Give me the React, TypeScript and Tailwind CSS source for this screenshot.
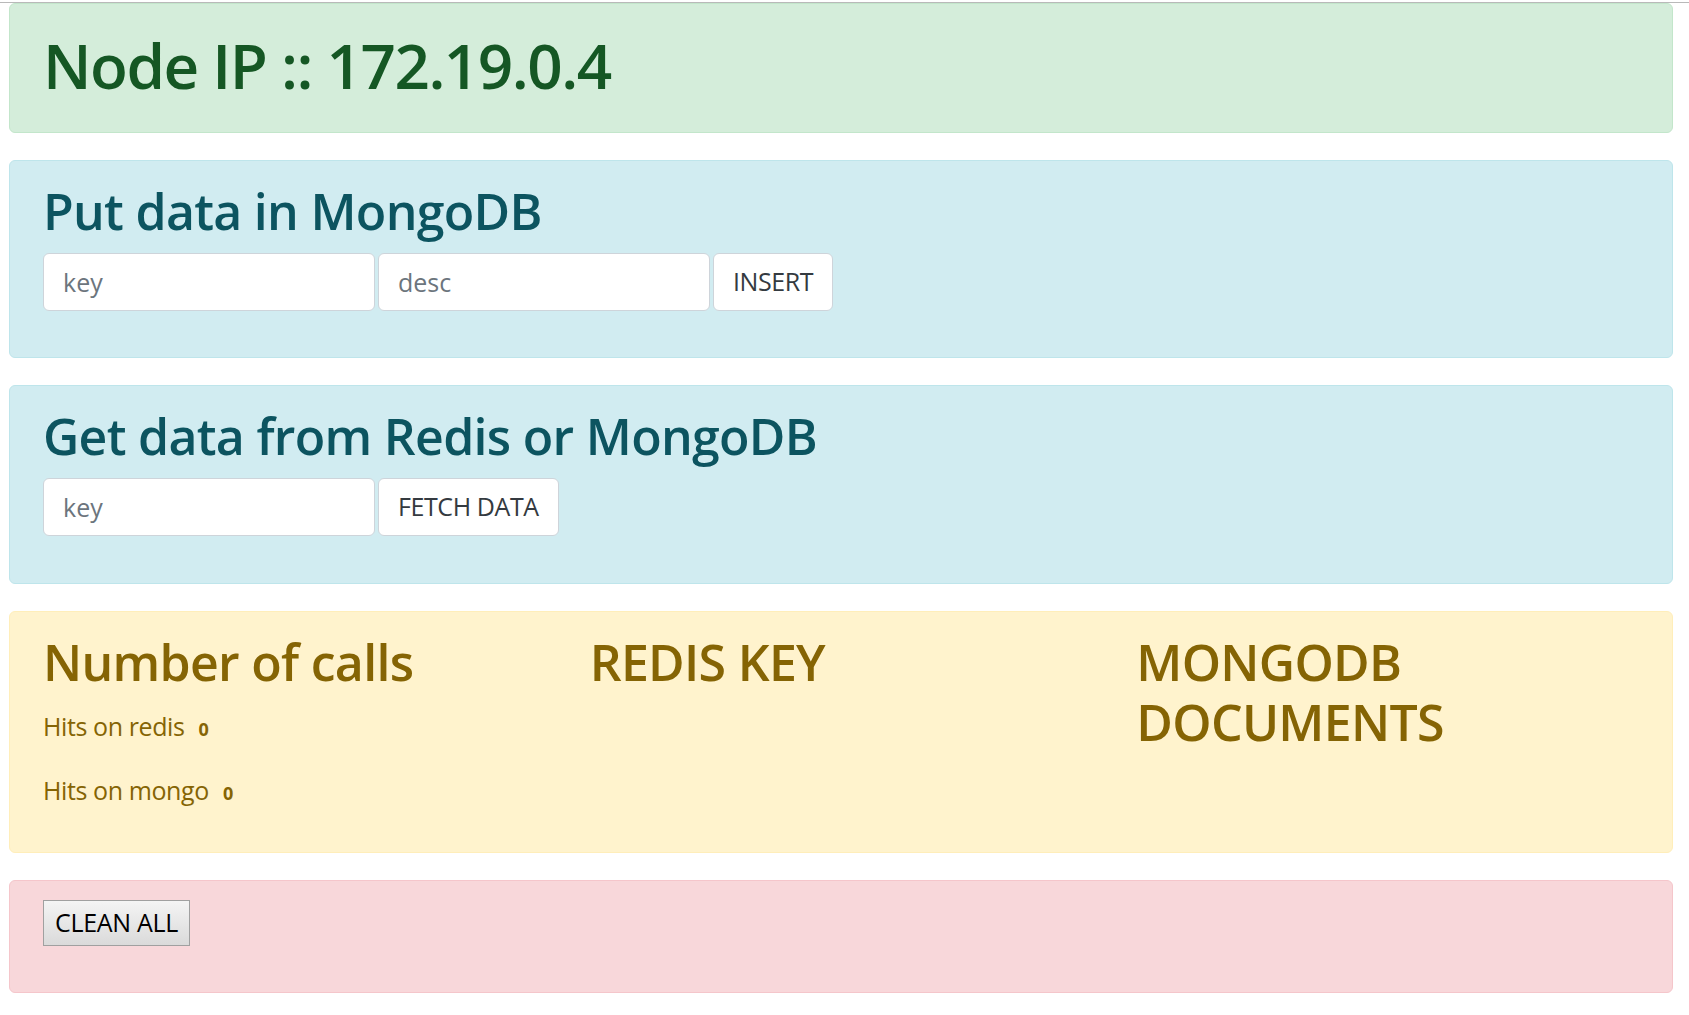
export default function App() {
  const font = { fontFamily: "'Open Sans', 'Noto Sans', sans-serif" };
  const inputCls =
    "h-[58px] w-[332px] rounded-[6px] border border-[#ced4da] bg-white px-[19px] text-[25px] text-[#495057] placeholder:text-[#6c757d]";
  const btnCls =
    "h-[58px] rounded-[6px] border border-[#ced4da] bg-white px-[19px] text-[25px] tracking-[-0.4px] text-[#343a40]";
  const h2Cls = "text-[50px] font-semibold leading-[60px] tracking-[-0.7px]";

  return (
    <div className="min-h-[1015px] bg-white" style={font}>
      <div className="h-[3px] border-b border-[#b9b9b9]" />
      <div className="ml-[9px] mr-[16px]">
        {/* node ip */}
        <div className="mb-[27px] rounded-[6px] border border-[#c3e6cb] bg-[#d4edda] px-[33px] py-[20px] text-[#155724]">
          <h1 className="mb-[9px] pt-[4px] text-[62px] font-semibold leading-[75px] tracking-[-1.5px]">
            Node IP :: 172.19.0.4
          </h1>
        </div>

        {/* insert */}
        <div className="mb-[27px] rounded-[6px] border border-[#bee5eb] bg-[#d1ecf1] px-[33px] py-[20px] text-[#0c5460]">
          <h2 className={`mb-[12px] ${h2Cls}`}>Put data in MongoDB</h2>
          <form className="mb-[26px] flex gap-[3px]">
            <input placeholder="key" className={inputCls} />
            <input placeholder="desc" className={inputCls} />
            <button type="button" className={btnCls}>
              INSERT
            </button>
          </form>
        </div>

        {/* fetch */}
        <div className="mb-[27px] rounded-[6px] border border-[#bee5eb] bg-[#d1ecf1] px-[33px] py-[20px] text-[#0c5460]">
          <h2 className={`mb-[12px] ${h2Cls}`}>Get data from Redis or MongoDB</h2>
          <form className="mb-[27px] flex gap-[3px]">
            <input placeholder="key" className={inputCls} />
            <button type="button" className={btnCls}>
              FETCH DATA
            </button>
          </form>
        </div>

        {/* stats */}
        <div className="mb-[27px] rounded-[6px] border border-[#ffeeba] bg-[#fff3cd] px-[33px] py-[20px] text-[#856404]">
          <div className="grid grid-cols-3 gap-x-[44px]">
            <div>
              <h2 className={`mb-[16px] ${h2Cls}`}>Number of calls</h2>
              <p className="mb-[27px] text-[25px] leading-[37px] tracking-[-0.4px]">
                Hits on redis <span className="px-[8px] text-[18px] font-bold leading-none">0</span>
              </p>
              <p className="mb-[23px] text-[25px] leading-[37px] tracking-[-0.4px]">
                Hits on mongo <span className="px-[8px] text-[18px] font-bold leading-none">0</span>
              </p>
            </div>
            <div>
              <h2 className={h2Cls}>REDIS KEY</h2>
            </div>
            <div>
              <h2 className={h2Cls}>MONGODB DOCUMENTS</h2>
            </div>
          </div>
        </div>

        {/* clean */}
        <div className="rounded-[6px] border border-[#f5c6cb] bg-[#f8d7da] px-[33px] pb-[21px] pt-[19px] text-[#721c24]">
          <form className="mb-[25px]">
            <button
              type="button"
              className="h-[46px] border border-[#a0a0a0] bg-gradient-to-b from-[#f4f4f4] to-[#dadada] px-[11px] text-[25px] tracking-[-0.3px] text-black"
            >
              CLEAN ALL
            </button>
          </form>
        </div>
      </div>
    </div>
  );
}
